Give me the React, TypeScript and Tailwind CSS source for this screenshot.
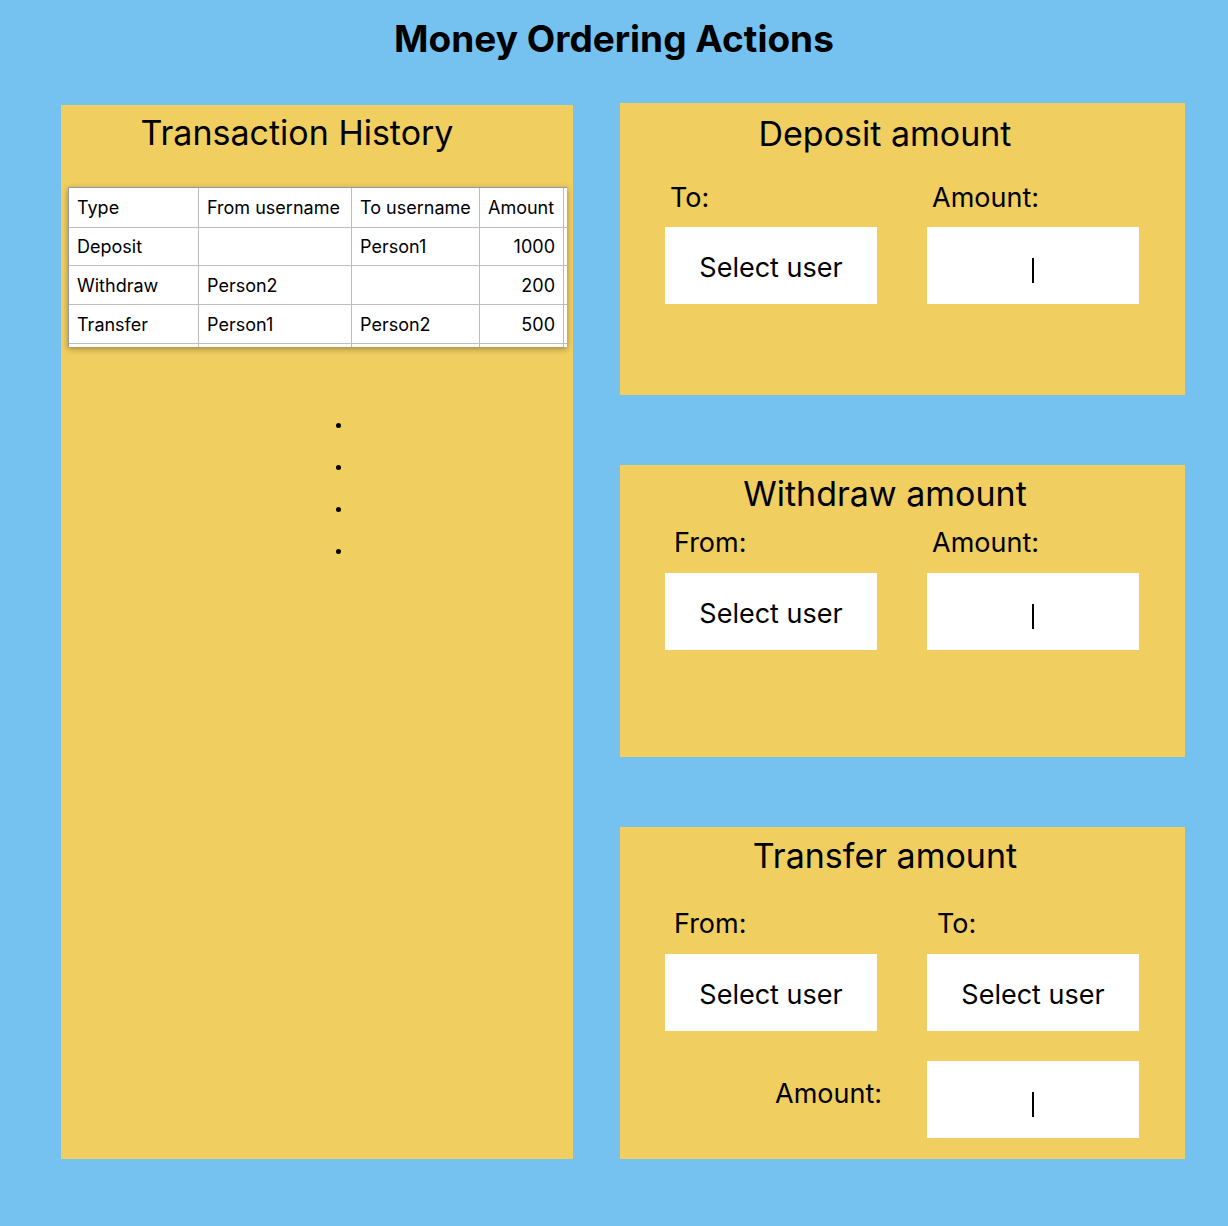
import React from "react";

const rows = [
  { type: "Type", from: "From username", to: "To username", amount: "Amount", head: true, h: "h-[40px]" },
  { type: "Deposit", from: "", to: "Person1", amount: "1000", head: false, h: "h-[38px]" },
  { type: "Withdraw", from: "Person2", to: "", amount: "200", head: false, h: "h-[39px]" },
  { type: "Transfer", from: "Person1", to: "Person2", amount: "500", head: false, h: "h-[39px]" },
  { type: "", from: "", to: "", amount: "", head: false, h: "h-[39px]" },
];

function SelectBox({ label }: { label: string }) {
  return (
    <div className="w-[212px] h-[77px] bg-white flex items-center justify-center pt-[5px] text-[27px] leading-[32px]">
      {label}
    </div>
  );
}

function AmountBox() {
  return (
    <div className="w-[212px] h-[77px] bg-white flex justify-center pt-[31px]">
      <div className="w-[2px] h-[25px] bg-black" />
    </div>
  );
}

function HistoryTable() {
  return (
    <div className="ml-[7px] mt-[34px] w-[499px] h-[160px] overflow-hidden bg-white border-t border-l border-[#9a9a9a] shadow-[0_2px_6px_rgba(0,0,0,0.35)] text-[18px] font-['Inter',sans-serif]">
      {rows.map((r, i) => (
        <div key={i} className={`flex border-b border-[#bdbdbd] ${r.h}`}>
          <div className="w-[130px] shrink-0 border-r border-[#bdbdbd] px-2 flex items-center">{r.type}</div>
          <div className="w-[153px] shrink-0 border-r border-[#bdbdbd] px-2 flex items-center">{r.from}</div>
          <div className="w-[128px] shrink-0 border-r border-[#bdbdbd] px-2 flex items-center">{r.to}</div>
          <div className={`w-[84px] shrink-0 border-r border-[#bdbdbd] px-2 flex items-center ${r.head ? "justify-start" : "justify-end"}`}>
            {r.amount}
          </div>
          <div className="w-[60px] shrink-0 border-r border-[#bdbdbd]" />
        </div>
      ))}
    </div>
  );
}

export default function App() {
  return (
    <div className="min-h-[1226px] bg-[#75c2f0] text-black font-['Inter',sans-serif] pb-[67px]">
      <h1 className="pt-[17px] text-center text-[37px] leading-[44px] font-bold">Money Ordering Actions</h1>

      <div className="flex items-start pl-[61px] gap-[47px] mt-[42px]">
        {/* history */}
        <div className="w-[512px] h-[1054px] mt-[2px] bg-[#f0ce60] pt-[8px]">
          <h2 className="text-center pr-[40px] text-[34px] leading-[40px]">Transaction History</h2>
          <HistoryTable />
          <div className="ml-[275px] mt-[76px] flex flex-col gap-[37px]">
            {[0, 1, 2, 3].map((d) => (
              <div key={d} className="w-[5px] h-[5px] rounded-full bg-black" />
            ))}
          </div>
        </div>

        {/* actions */}
        <div className="w-[565px] flex flex-col gap-[70px]">
          <div className="h-[292px] bg-[#f0ce60] pt-[11px]">
            <h2 className="text-center pr-[35px] text-[34px] leading-[40px]">Deposit amount</h2>
            <div className="flex gap-[50px] pl-[45px] mt-[28px] text-[27px] leading-[32px]">
              <div className="w-[212px] pl-[5px]">To:</div>
              <div className="w-[212px] pl-[5px]">Amount:</div>
            </div>
            <div className="flex gap-[50px] pl-[45px] mt-[13px]">
              <SelectBox label="Select user" />
              <AmountBox />
            </div>
          </div>

          <div className="h-[292px] bg-[#f0ce60] pt-[9px]">
            <h2 className="text-center pr-[35px] text-[34px] leading-[40px]">Withdraw amount</h2>
            <div className="flex gap-[50px] pl-[45px] mt-[13px] text-[27px] leading-[32px]">
              <div className="w-[212px] pl-[9px]">From:</div>
              <div className="w-[212px] pl-[5px]">Amount:</div>
            </div>
            <div className="flex gap-[50px] pl-[45px] mt-[14px]">
              <SelectBox label="Select user" />
              <AmountBox />
            </div>
          </div>

          <div className="h-[332px] bg-[#f0ce60] pt-[9px]">
            <h2 className="text-center pr-[35px] text-[34px] leading-[40px]">Transfer amount</h2>
            <div className="flex gap-[50px] pl-[45px] mt-[32px] text-[27px] leading-[32px]">
              <div className="w-[212px] pl-[9px]">From:</div>
              <div className="w-[212px] pl-[10px]">To:</div>
            </div>
            <div className="flex gap-[50px] pl-[45px] mt-[14px]">
              <SelectBox label="Select user" />
              <SelectBox label="Select user" />
            </div>
            <div className="flex items-start gap-[45px] pl-[45px] mt-[30px]">
              <div className="w-[217px] text-right mt-[17px] text-[27px] leading-[32px]">Amount:</div>
              <AmountBox />
            </div>
          </div>
        </div>
      </div>
    </div>
  );
}
